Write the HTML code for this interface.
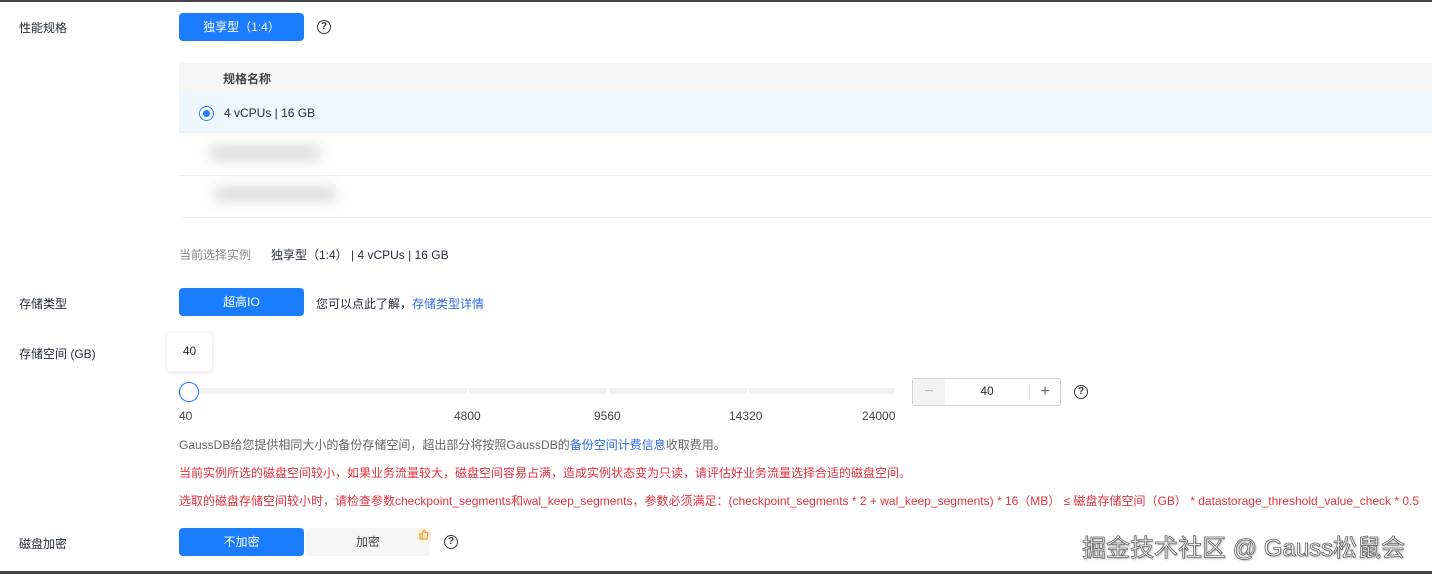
<!DOCTYPE html>
<html><head><meta charset="utf-8"><style>
*{margin:0;padding:0;box-sizing:border-box}
body{width:1432px;height:574px;background:#fff;position:relative;overflow:hidden;font-family:"Liberation Sans","Noto Sans CJK SC",sans-serif;font-size:12px;color:#252b3a}
.abs{position:absolute}
.lbl{position:absolute;left:19px;font-size:12px;color:#252b3a}
.btn{position:absolute;background:#1a7cff;color:#fff;border-radius:4px;text-align:center;font-size:12px}
.q{position:absolute;width:14px;height:14px;border:1.3px solid #333;border-radius:50%;font-size:10px;line-height:11px;text-align:center;color:#333;font-weight:bold}
.red{position:absolute;left:179px;color:#e5323e;font-size:12px;white-space:nowrap}
</style></head><body>
<div class="abs" style="left:0;top:0;width:1432px;height:2px;background:#444"></div>
<div class="abs" style="left:0;top:571px;width:1432px;height:3px;background:#444"></div>

<div class="lbl" style="top:19px">性能规格</div>
<div class="btn" style="left:179px;top:13px;width:125px;height:28px;line-height:28px">独享型（1:4）</div>
<div class="q" style="left:317px;top:20px">?</div>

<div class="abs" style="left:179px;top:63px;width:1253px;height:30px;background:#f5f5f5"></div>
<div class="abs" style="left:223px;top:70px;font-weight:bold;color:#444">规格名称</div>
<div class="abs" style="left:179px;top:93px;width:1253px;height:40px;background:#eef6ff;border-bottom:1px solid #e8ecf2"></div>
<div class="abs" style="left:199px;top:106px;width:15px;height:15px;border:1.5px solid #1a7cff;border-radius:50%;background:#fff"><div style="margin:2.5px;width:7px;height:7px;border-radius:50%;background:#1a7cff"></div></div>
<div class="abs" style="left:224px;top:106px;color:#252b3a">4 vCPUs | 16 GB</div>
<div class="abs" style="left:210px;top:145px;width:110px;height:16px;background:#ddd;filter:blur(6px)"></div>
<div class="abs" style="left:179px;top:175px;width:1253px;height:1px;background:#eee"></div>
<div class="abs" style="left:215px;top:186px;width:120px;height:16px;background:#ddd;filter:blur(6px)"></div>
<div class="abs" style="left:179px;top:217px;width:1253px;height:1px;background:#eee"></div>

<div class="abs" style="left:179px;top:246px;color:#888">当前选择实例</div>
<div class="abs" style="left:271px;top:246px;color:#252b3a">独享型（1:4） | 4 vCPUs | 16 GB</div>

<div class="lbl" style="top:295px">存储类型</div>
<div class="btn" style="left:179px;top:288px;width:125px;height:28px;line-height:28px">超高IO</div>
<div class="abs" style="left:316px;top:295px">您可以点此了解，<span style="color:#2e6be6">存储类型详情</span></div>

<div class="lbl" style="top:345px">存储空间 (GB)</div>
<div class="abs" style="left:167px;top:333px;width:45px;height:38px;background:#fff;box-shadow:0 1px 6px rgba(0,0,0,.12);border-radius:3px;text-align:center;line-height:36px">40</div>
<div class="abs" style="left:188px;top:388px;width:707px;height:6px;background:#f2f2f2"></div>
<div class="abs" style="left:467px;top:388px;width:2px;height:6px;background:#fff"></div>
<div class="abs" style="left:607px;top:388px;width:2px;height:6px;background:#fff"></div>
<div class="abs" style="left:747px;top:388px;width:2px;height:6px;background:#fff"></div>
<div class="abs" style="left:179px;top:382px;width:20px;height:20px;border:1.5px solid #1a7cff;border-radius:50%;background:#fff"></div>
<div class="abs" style="left:179px;top:409px;color:#444">40</div>
<div class="abs" style="left:454px;top:409px;color:#444">4800</div>
<div class="abs" style="left:594px;top:409px;color:#444">9560</div>
<div class="abs" style="left:729px;top:409px;color:#444">14320</div>
<div class="abs" style="left:862px;top:409px;color:#444">24000</div>
<div class="abs" style="left:912px;top:378px;width:149px;height:28px;border:1px solid #d0d3d9;border-radius:3px;background:#fff"></div>
<div class="abs" style="left:913px;top:379px;width:32px;height:26px;background:#f3f3f3;color:#bbb;text-align:center;line-height:26px;font-size:16px">−</div>
<div class="abs" style="left:945px;top:384px;width:84px;text-align:center">40</div>
<div class="abs" style="left:1029px;top:383px;width:1px;height:18px;background:#ddd"></div>
<div class="abs" style="left:1030px;top:379px;width:30px;height:26px;color:#666;text-align:center;line-height:26px;font-size:16px">+</div>
<div class="q" style="left:1074px;top:385px">?</div>

<div class="abs" style="left:179px;top:436px;color:#666">GaussDB给您提供相同大小的备份存储空间，超出部分将按照GaussDB的<span style="color:#2e6be6">备份空间计费信息</span>收取费用。</div>
<div class="red" style="top:464px">当前实例所选的磁盘空间较小，如果业务流量较大，磁盘空间容易占满，造成实例状态变为只读，请评估好业务流量选择合适的磁盘空间。</div>
<div class="red" style="top:492px">选取的磁盘存储空间较小时，请检查参数checkpoint_segments和wal_keep_segments，参数必须满足：(checkpoint_segments * 2 + wal_keep_segments) * 16（MB） ≤ 磁盘存储空间（GB） * datastorage_threshold_value_check * 0.5</div>

<div class="lbl" style="top:535px">磁盘加密</div>
<div class="btn" style="left:179px;top:528px;width:125px;height:28px;line-height:28px">不加密</div>
<div class="abs" style="left:306px;top:528px;width:124px;height:28px;background:#f5f5f5;border-radius:4px;text-align:center;line-height:28px;color:#444">加密</div>
<svg class="abs" style="left:417px;top:528px" width="14" height="14" viewBox="0 0 14 14"><rect x="0" y="0" width="14" height="14" rx="2" fill="#fdf1e0"/><path d="M3 6h2v5H3zM5 6l2-4c1 0 1.5 1 1 2.5H11l-1 6.5H5" fill="none" stroke="#f0a030" stroke-width="1.2"/></svg>
<div class="q" style="left:444px;top:535px">?</div>

<div class="abs" style="left:1082px;top:528px;font-size:24px;color:rgba(255,255,255,.9);-webkit-text-stroke:0.8px #666;text-shadow:1px 1px 2px #999;white-space:nowrap">掘金技术社区 @ Gauss松鼠会</div>
</body></html>
